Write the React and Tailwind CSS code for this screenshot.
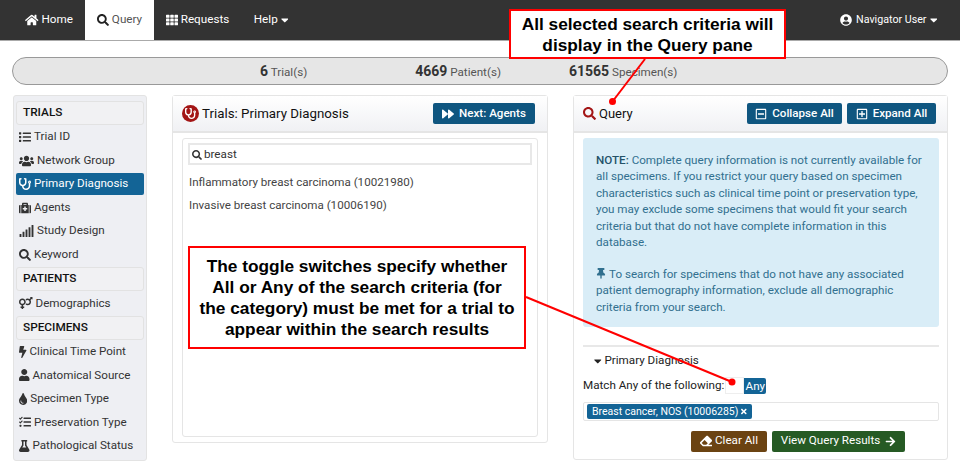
import { FaHome, FaSearch, FaTh, FaUserCircle, FaList, FaUsers, FaStethoscope, FaMedkit, FaSignal, FaBolt, FaUser, FaTint, FaTasks, FaFlask, FaVenusMars, FaForward, FaRegMinusSquare, FaRegPlusSquare, FaEraser, FaArrowRight, FaTimes, FaThumbtack, FaCaretDown } from 'react-icons/fa'

const sections = [
  {
    title: 'TRIALS',
    items: [
      { icon: FaList, size: 'w-[12px]', label: 'Trial ID' },
      { icon: FaUsers, size: 'w-[15px]', label: 'Network Group' },
      { icon: FaStethoscope, size: 'w-[12px]', label: 'Primary Diagnosis', active: true },
      { icon: FaMedkit, size: 'w-[12px]', label: 'Agents' },
      { icon: FaSignal, size: 'w-[15px]', label: 'Study Design' },
      { icon: FaSearch, size: 'w-[12px]', label: 'Keyword' },
    ],
  },
  { title: 'PATIENTS', items: [{ icon: FaVenusMars, size: 'w-[13.5px]', label: 'Demographics' }] },
  {
    title: 'SPECIMENS',
    items: [
      { icon: FaBolt, size: 'w-[7.5px]', label: 'Clinical Time Point' },
      { icon: FaUser, size: 'w-[10.5px]', label: 'Anatomical Source' },
      { icon: FaTint, size: 'w-[8.25px]', label: 'Specimen Type' },
      { icon: FaTasks, size: 'w-[12px]', label: 'Preservation Type' },
      { icon: FaFlask, size: 'w-[10.5px]', label: 'Pathological Status' },
    ],
  },
]

function Sidebar() {
  return (
    <aside className="w-[134px] h-[366px] shrink-0 ml-[13px] rounded-[3px] border border-[#e3e3e3] bg-[#eeeff3] px-[2px] pt-[5px]">
      {sections.map(section => (
        <div key={section.title}>
          <div className="h-[24px] flex items-center rounded-[3px] border border-[#e2e2e2] bg-[#f1f1f3] px-[6px] text-[11.8px] font-medium text-[#111]">
            {section.title}
          </div>
          <div className="pt-[1px]">
            {section.items.map(({ icon: Icon, size, label, active }) => (
              <div
                key={label}
                className={`h-[22px] mb-[1.55px] flex items-center gap-[3px] whitespace-nowrap rounded-[2px] px-[3px] text-[11.65px] ${active ? 'bg-[#136496] text-white' : 'text-[#333]'}`}
              >
                <Icon className={`h-[12px] ${size}`} />
                {label}
              </div>
            ))}
          </div>
        </div>
      ))}
    </aside>
  )
}

function Callout({ className, children }) {
  return (
    <div className={`absolute z-10 border-2 border-[#f00] bg-white text-center font-bold text-black font-['Liberation_Sans',sans-serif] ${className}`}>
      {children}
    </div>
  )
}

export default function App() {
  return (
    <div className="relative w-[960px] h-[474px] overflow-hidden bg-white font-['Roboto',sans-serif]">
      {/* Navbar */}
      <nav className="h-[41px] bg-[#333] border-b border-[#aaa] flex items-stretch pl-[13px] pr-[23px] text-[11.7px] text-white">
        <div className="w-[72px] flex items-center justify-center gap-[3px]">
          <FaHome className="h-[12px] w-[13.5px]" />Home
        </div>
        <div className="w-[69px] flex items-center justify-center gap-[3px] bg-white text-[#555]">
          <FaSearch className="w-[12px] h-[12px] text-[#222]" />Query
        </div>
        <div className="w-[87px] flex items-center justify-center gap-[3px]">
          <FaTh className="w-[12px] h-[12px]" />Requests
        </div>
        <div className="w-[60px] flex items-center justify-center gap-[3px]">
          Help<FaCaretDown className="h-[12px] w-[7.5px]" />
        </div>
        <div className="ml-auto flex items-center gap-[3px] text-[10.7px]">
          <FaUserCircle className="w-[12px] h-[12px] mr-[1px]" />Navigator User<FaCaretDown className="h-[12px] w-[7.5px]" />
        </div>
      </nav>

      {/* Counts */}
      <div className="ml-[12px] w-[936px] mt-[16px] h-[28px] rounded-full border-[1.5px] border-[#999] bg-[#e6e6e6] flex items-center text-[11.65px] text-[#555]">
        <span className="ml-[247px]"><b className="text-[14px] text-[#333]">6</b> Trial(s)</span>
        <span className="ml-[108px]"><b className="text-[14px] text-[#333]">4669</b> Patient(s)</span>
        <span className="ml-[68px]"><b className="text-[14px] text-[#333]">61565</b> Specimen(s)</span>
      </div>

      <div className="flex items-start mt-[10px]">
        <Sidebar />

        {/* Trials panel */}
        <section className="ml-[25px] w-[376px] h-[348px] rounded-[3px] border border-[#e5e5e5]">
          <div className="h-[37px] flex items-center justify-between pl-[9px] pr-[12px] border-b-2 border-[#e5e5e5] bg-gradient-to-b from-white to-[#f0f1f4]">
            <div className="flex items-center gap-[3px] text-[13.3px] text-[#111]">
              <span className="w-[17px] h-[17px] rounded-full bg-[#a31515] flex items-center justify-center">
                <FaStethoscope className="w-[11px] h-[11px] text-white" />
              </span>
              Trials: Primary Diagnosis
            </div>
            <button className="h-[21px] w-[102px] flex items-center justify-center gap-[5px] rounded-[2px] bg-[#0f5680] text-[11.6px] font-medium text-white">
              <FaForward className="w-[12px] h-[12px]" />Next: Agents
            </button>
          </div>
          <div className="mx-[9px] mt-[5px] h-[299px] rounded-[3px] border border-[#e5e5e5] px-[5px] pt-[4px]">
            <div className="h-[22px] border-2 border-[#e8e8e8] bg-white flex items-center gap-[2px] px-[2px] pt-[2px] text-[11.65px] text-[#333]">
              <FaSearch className="w-[10px] h-[10px]" />breast
            </div>
            <p className="mt-[9px] ml-[1px] text-[11.6px] text-[#444]">Inflammatory breast carcinoma (10021980)</p>
            <p className="mt-[6px] ml-[1px] text-[11.6px] text-[#444]">Invasive breast carcinoma (10006190)</p>
          </div>
        </section>

        {/* Query panel */}
        <section className="ml-[25px] w-[375px] h-[365px] rounded-[3px] border border-[#e5e5e5]">
          <div className="h-[37px] flex items-center justify-between pl-[9px] pr-[11px] border-b-2 border-[#e5e5e5] bg-gradient-to-b from-white to-[#f0f1f4]">
            <div className="flex items-center gap-[3px] text-[13px] text-[#111]">
              <FaSearch className="w-[13px] h-[13px] text-[#a31515]" />Query
            </div>
            <div className="flex gap-[5px]">
              <button className="h-[21px] w-[95px] flex items-center justify-center gap-[5px] rounded-[2px] bg-[#0f5680] text-[11.6px] font-medium text-white">
                <FaRegMinusSquare className="w-[12px] h-[12px]" />Collapse All
              </button>
              <button className="h-[21px] w-[89px] flex items-center justify-center gap-[5px] rounded-[2px] bg-[#0f5680] text-[11.6px] font-medium text-white">
                <FaRegPlusSquare className="w-[12px] h-[12px]" />Expand All
              </button>
            </div>
          </div>
          <div className="ml-[9px] w-[356px] mt-[5px] h-[189px] rounded-[3px] bg-[#d9edf7] pl-[13px] pr-[10px] pt-[14px] text-[11.65px] leading-[16.4px] text-[#31708f]">
            <p><b className="font-medium text-[#245269]">NOTE:</b> Complete query information is not currently available for all specimens. If you restrict your query based on specimen characteristics such as clinical time point or preservation type, you may exclude some specimens that would fit your search criteria but that do not have complete information in this database.</p>
            <p className="mt-[15.4px]"><FaThumbtack className="inline w-[10px] h-[11px] mr-[3px] align-[-1px]" />To search for specimens that do not have any associated patient demography information, exclude all demographic criteria from your search.</p>
          </div>
          <div className="ml-[9px] w-[356px] mt-[18px] border-t-2 border-[#e8e8e8] pt-[6px]">
            <div className="h-[16px] ml-[11px] flex items-center gap-[3px] text-[11.65px] text-[#222]">
              <FaCaretDown className="h-[12px] w-[7.5px]" />Primary Diagnosis
            </div>
            <div className="mt-[8px] h-[17px] flex items-center text-[11.65px] text-[#222]">
              Match Any of the following:
              <span className="ml-[1px] w-[19px] h-[17px] border border-[#eee] bg-white" />
              <span className="h-[16px] w-[22px] rounded-r-[2px] bg-[#136496] text-center leading-[16px] text-white">Any</span>
            </div>
            <div className="mt-[8px] h-[19px] rounded-[2px] border border-[#e5e5e5] flex items-center px-[3px]">
              <span className="h-[15px] w-[165px] flex items-center gap-[3px] rounded-[2px] bg-[#136496] px-[5px] text-[10.5px] whitespace-nowrap text-white">
                Breast cancer, NOS (10006285)<FaTimes className="w-[9px] h-[9px]" />
              </span>
            </div>
            <div className="mt-[9.5px] flex justify-end gap-[5px] mr-[34px]">
              <button className="h-[21px] w-[76px] flex items-center justify-center gap-[3px] rounded-[2px] bg-[#6b4312] text-[11.65px] text-white">
                <FaEraser className="w-[12px] h-[12px]" />Clear All
              </button>
              <button className="h-[21px] w-[133px] flex items-center justify-center gap-[5px] rounded-[2px] bg-[#265a24] text-[11.65px] text-white">
                View Query Results<FaArrowRight className="w-[11px] h-[11px]" />
              </button>
            </div>
          </div>
        </section>
      </div>

      {/* Annotations */}
      <Callout className="left-[509px] top-[9px] w-[277px] h-[50px] text-[17.3px] leading-[21px] pt-[3px]">
        All selected search criteria will<br />display in the Query pane
      </Callout>
      <Callout className="left-[188px] top-[246px] w-[338px] h-[103px] text-[17.3px] leading-[21px] pt-[8px]">
        The toggle switches specify whether<br />All or Any of the search criteria (for<br />the category) must be met for a trial to<br />appear within the search results
      </Callout>
      <svg className="absolute inset-0 z-10 pointer-events-none" width="960" height="474">
        <line x1="645" y1="59" x2="612.5" y2="101.5" stroke="#f00" strokeWidth="2" />
        <circle cx="612.5" cy="101.5" r="3.5" fill="#f00" />
        <line x1="526" y1="297" x2="732" y2="382" stroke="#f00" strokeWidth="2" />
        <circle cx="732" cy="382" r="3.5" fill="#f00" />
      </svg>
    </div>
  )
}
